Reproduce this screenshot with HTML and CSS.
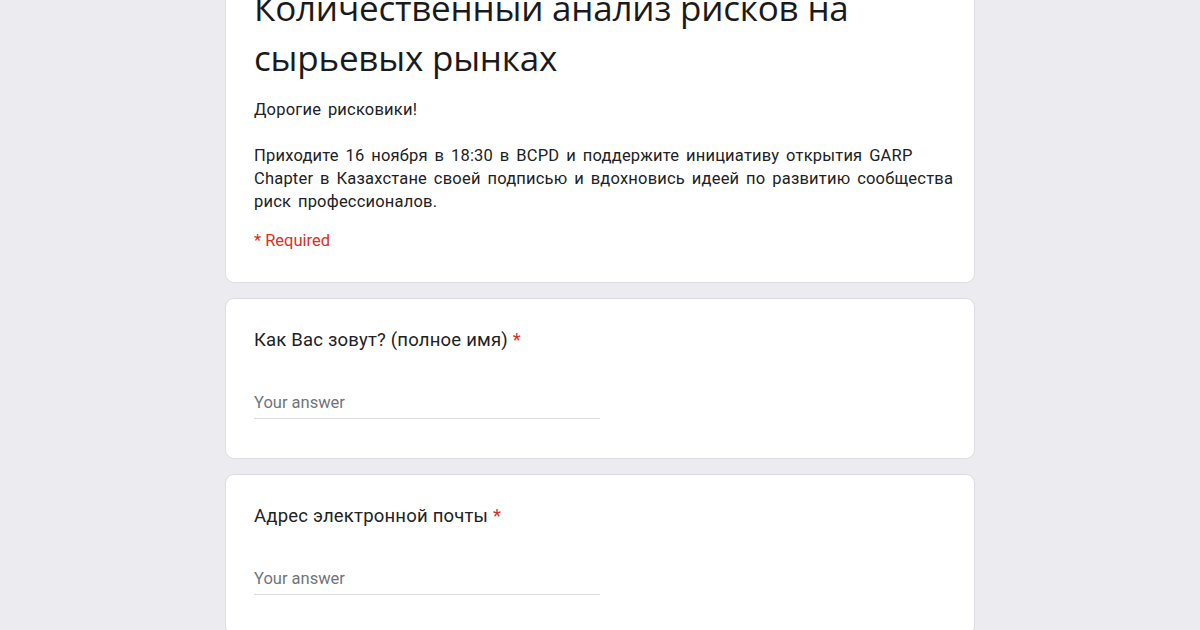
FILE: index.html
```html
<!DOCTYPE html>
<html lang="ru">
<head>
    <meta charset="UTF-8">
    <meta name="viewport" content="width=device-width, initial-scale=1.0">
    <title>Количественный анализ рисков на сырьевых рынках</title>
    <link rel="stylesheet" href="styles.css">
</head>
<body>
    <div class="form-wrap">
        <div class="card header-card">
            <h1 class="form-title">Количественный анализ рисков на сырьевых рынках</h1>
            <div class="form-desc">
                <p>Дорогие рисковики!</p>
                <p>Приходите 16 ноября в 18:30 в BCPD и поддержите инициативу открытия GARP Chapter в Казахстане своей подписью и вдохновись идеей по развитию сообщества риск профессионалов.</p>
            </div>
            <div class="required-note">* Required</div>
        </div>

        <div class="card question-card">
            <div class="question">Как Вас зовут? (полное имя) <span class="star">*</span></div>
            <div class="answer">Your answer</div>
        </div>

        <div class="card question-card">
            <div class="question">Адрес электронной почты <span class="star">*</span></div>
            <div class="answer">Your answer</div>
        </div>
    </div>
</body>
</html>
```

FILE: styles.css
```css
* {
    margin: 0;
    padding: 0;
    box-sizing: border-box;
}
body {
    background: #ebebf0;
    font-family: Roboto, "Noto Sans", sans-serif;
    color: #202124;
    overflow: hidden;
}
.form-wrap {
    width: 750px;
    margin: -34px auto 0;   /* страница прокручена, заголовок срезан сверху */
    display: flex;
    flex-direction: column;
    gap: 15px;
}
.card {
    background: #fff;
    border: 1px solid #dcdce2;
    border-radius: 9px;
    padding: 0 28px;
}
.header-card {
    padding-top: 16px;
    padding-right: 18px;
    padding-bottom: 32px;
}
.form-title {
    font-family: "Open Sans", "Noto Sans", sans-serif;
    font-weight: 400;
    font-size: 35px;
    line-height: 50px;
    letter-spacing: -0.2px;
    color: #1a1a1c;
    margin-bottom: 15px;
}
.form-desc {
    font-size: 16.5px;
    line-height: 23px;
    letter-spacing: 0.2px;
    word-spacing: 2.5px;
    color: #202124;
}
.form-desc p + p {
    margin-top: 23px;
}
.required-note {
    color: #d93025;
    font-size: 16.5px;
    margin-top: 18px;
}
.question-card {
    padding-top: 29px;
    padding-bottom: 39px;
}
.question {
    font-size: 18.5px;
    line-height: 24px;
    letter-spacing: 0.2px;
    color: #202124;
}
.star {
    color: #d93025;
}
.answer {
    width: 346px;
    margin-top: 41px;
    padding-bottom: 5px;
    border-bottom: 1px solid #dadce0;
    font-size: 16.5px;
    line-height: 20px;
    color: #70757a;
}
```
